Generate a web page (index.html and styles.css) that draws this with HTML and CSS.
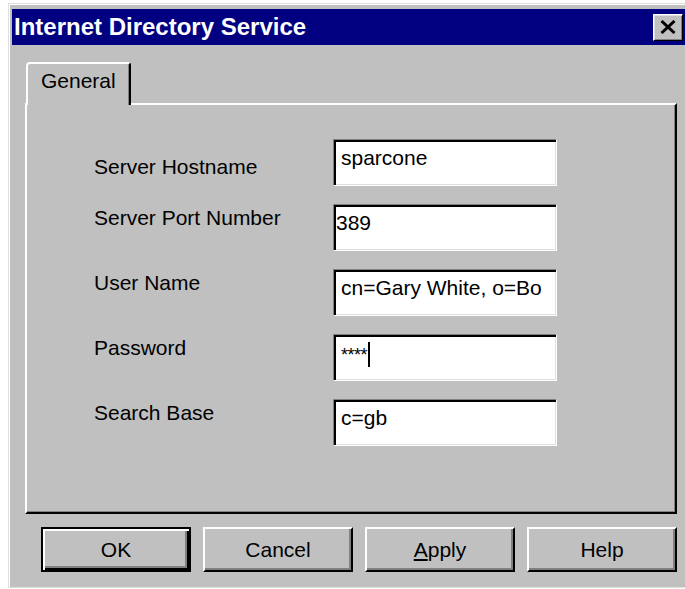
FILE: index.html
```html
<!DOCTYPE html>
<html lang="en">
<head>
<meta charset="utf-8">
<title>Internet Directory Service</title>
<link rel="stylesheet" href="styles.css">
</head>
<body>
<div class="window">
  <div class="titlebar">
    <span class="title">Internet Directory Service</span>
    <button class="close" type="button" aria-label="Close">
      <svg width="16" height="14" viewBox="0 0 16 14"><path d="M1.5 1 L14.5 13 M14.5 1 L1.5 13" stroke="#000" stroke-width="3" fill="none"/></svg>
    </button>
  </div>
  <div class="content">
    <div class="tabs">
      <div class="tab">General</div>
    </div>
    <div class="panel">
      <div class="form">
        <div class="row row-first">
          <span class="label">Server Hostname</span>
          <div class="field">sparcone</div>
        </div>
        <div class="row">
          <span class="label">Server Port Number</span>
          <div class="field field-tight">389</div>
        </div>
        <div class="row">
          <span class="label">User Name</span>
          <div class="field">cn=Gary White, o=Bo</div>
        </div>
        <div class="row">
          <span class="label">Password</span>
          <div class="field"><span class="mask">****</span><span class="caret"></span></div>
        </div>
        <div class="row">
          <span class="label">Search Base</span>
          <div class="field">c=gb</div>
        </div>
      </div>
    </div>
    <div class="buttons">
      <button class="btn btn-default" type="button">OK</button>
      <button class="btn" type="button">Cancel</button>
      <button class="btn" type="button"><u>A</u>pply</button>
      <button class="btn" type="button">Help</button>
    </div>
  </div>
</div>
</body>
</html>
```
FILE: styles.css
```css
* {
  box-sizing: border-box;
}

html,
body {
  margin: 0;
  height: 100%;
}

body {
  background: #ffffff;
  overflow: hidden;
  font-family: "Liberation Sans", Arial, sans-serif;
  color: #000;
}

/* dialog frame */
.window {
  margin: 3px 0 0 8px;
  width: 683px;
  height: 585px;
  background: #c0c0c0;
  border-top: 1px solid #dfdfdf;
  border-left: 1px solid #dfdfdf;
  border-bottom: 1px solid #dfdfdf;
  box-shadow: inset 1px 1px 0 #ffffff;
  padding: 5px 0 0 3px;
}

.titlebar {
  height: 36px;
  background: #000080;
  display: flex;
  align-items: center;
  justify-content: space-between;
  padding: 0 8px 0 2px;
}

.title {
  color: #ffffff;
  font-weight: bold;
  font-size: 24px;
  line-height: 24px;
  letter-spacing: 0;
}

.close {
  width: 30px;
  height: 27px;
  padding: 0;
  margin: 0;
  background: #c0c0c0;
  border: 1px solid;
  border-color: #ffffff #000000 #000000 #ffffff;
  box-shadow: inset 1px 1px 0 #dfdfdf, inset -1px -1px 0 #808080;
  display: flex;
  align-items: center;
  justify-content: center;
}

.close svg {
  display: block;
}

/* tab strip and page */
.content {
  padding: 17px 0 0 13px;
}

.tabs {
  display: flex;
  padding-left: 1px;
  position: relative;
  z-index: 1;
  margin-bottom: -2px;
}

.tab {
  width: 105px;
  height: 43px;
  background: #c0c0c0;
  border-top: 2px solid #ffffff;
  border-left: 2px solid #ffffff;
  border-right: 2px solid #000000;
  border-top-left-radius: 4px;
  border-top-right-radius: 3px;
  box-shadow: inset -1px 0 0 #808080;
  font-size: 21px;
  line-height: 24px;
  padding: 5px 0 0 13px;
}

.panel {
  width: 652px;
  height: 411px;
  border-top: 2px solid #ffffff;
  border-left: 2px solid #ffffff;
  border-right: 2px solid #000000;
  border-bottom: 2px solid #000000;
  box-shadow: inset -1px -1px 0 #808080;
}

.form {
  display: flex;
  flex-direction: column;
  gap: 18px;
  padding: 34px 0 0 67px;
}

.row {
  display: flex;
  align-items: flex-start;
}

.label {
  width: 239px;
  font-size: 21px;
  line-height: 24px;
  padding-top: 2px;
}

.row-first .label {
  padding-top: 16px;
}

.field {
  width: 224px;
  height: 47px;
  background: #ffffff;
  border: 1px solid;
  border-color: #808080 #ffffff #ffffff #808080;
  box-shadow: inset 2px 2px 0 #000000, inset -1px -1px 0 #dfdfdf;
  font-size: 21px;
  line-height: 24px;
  padding: 6px 0 0 7px;
  white-space: nowrap;
  overflow: hidden;
  display: flex;
  align-items: flex-start;
}

.field-tight {
  padding-left: 2px;
}

.mask {
  font-size: 18px;
  line-height: 24px;
  letter-spacing: -0.5px;
  padding-top: 2px;
}

.caret {
  display: inline-block;
  width: 2px;
  height: 25px;
  background: #000000;
  margin-top: 1px;
  margin-left: 1px;
}

/* command buttons */
.buttons {
  display: flex;
  gap: 12px;
  margin-top: 13px;
  padding-left: 16px;
}

.btn {
  width: 150px;
  height: 45px;
  margin: 0;
  padding: 0;
  background: #c0c0c0;
  font-family: "Liberation Sans", Arial, sans-serif;
  font-size: 21px;
  line-height: 24px;
  color: #000;
  border: 2px solid;
  border-color: #ffffff #000000 #000000 #ffffff;
  box-shadow: inset -2px -2px 0 #808080;
}

.btn u {
  text-underline-offset: 2px;
}

.btn-default {
  border-color: #000000;
  box-shadow: inset 2px 2px 0 #ffffff, inset -2px -2px 0 #000000, inset -4px -4px 0 #808080;
}
```
